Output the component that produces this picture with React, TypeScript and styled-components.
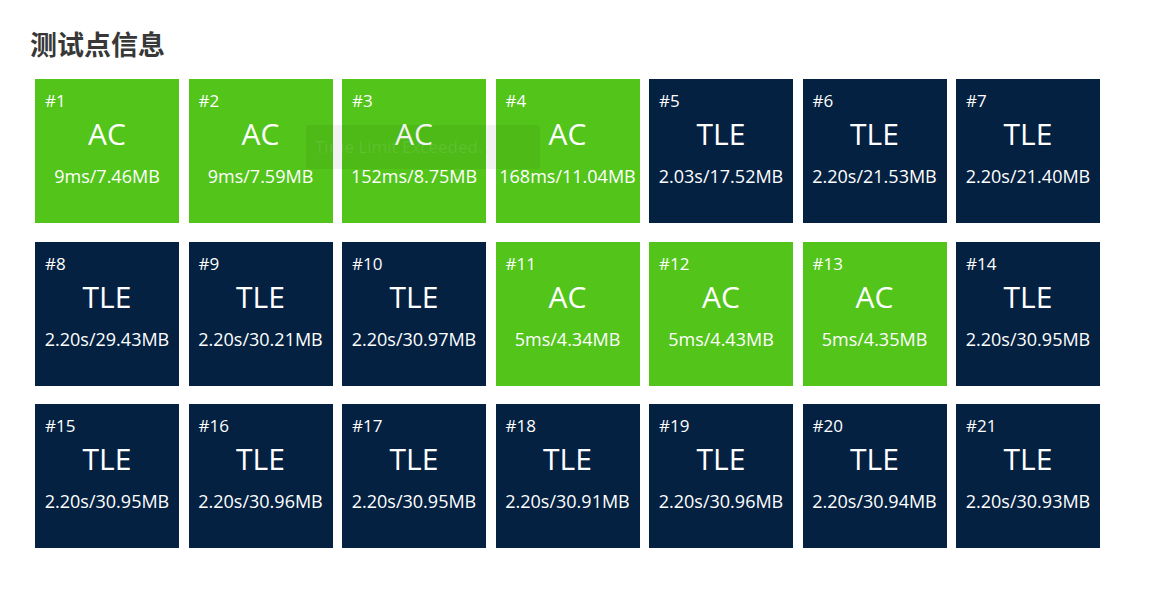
import React from 'react';
import styled, { createGlobalStyle } from 'styled-components';

const GlobalStyle = createGlobalStyle`
  html, body {
    margin: 0;
    padding: 0;
    background: #ffffff;
  }
  body {
    font-family: 'Open Sans', 'Noto Sans', 'Noto Sans CJK SC', sans-serif;
  }
`;

const Page = styled.div`
  width: 1154px;
  height: 593px;
  box-sizing: border-box;
  padding: 26px 0 0 30px;
`;

const Title = styled.h2`
  margin: 0;
  font-family: 'Noto Sans CJK SC', 'Noto Sans', sans-serif;
  font-size: 27px;
  font-weight: 700;
  line-height: 36px;
  color: #383838;
`;

const Grid = styled.div`
  position: relative;
  display: grid;
  grid-template-columns: repeat(7, 144px);
  column-gap: 9.5px;
  row-gap: 18.5px;
  margin: 17px 0 0 5px;
`;

const Tile = styled.div<{ $status: 'AC' | 'TLE' }>`
  height: 144px;
  box-sizing: border-box;
  padding: 11px 10px 0;
  display: flex;
  flex-direction: column;
  background: ${(p) => (p.$status === 'AC' ? '#52c41a' : '#042142')};
  color: #ffffff;
`;

const CaseId = styled.div`
  font-size: 17px;
  line-height: 22px;
`;

const Verdict = styled.div`
  margin-top: 3px;
  font-size: 30px;
  line-height: 38px;
  text-align: center;
`;

const Usage = styled.div`
  margin-top: 11px;
  font-size: 18px;
  line-height: 24px;
  text-align: center;
  white-space: nowrap;
  margin-left: -10px;
  margin-right: -10px;
`;

const Tooltip = styled.div`
  position: absolute;
  left: 271px;
  top: 46px;
  width: 234px;
  height: 44px;
  box-sizing: border-box;
  padding: 0 9px;
  border-radius: 4px;
  background: rgba(0, 0, 0, 0.05);
  color: rgba(255, 255, 255, 0.1);
  font-size: 17px;
  line-height: 44px;
  white-space: nowrap;
  pointer-events: none;
`;

type Case = { status: 'AC' | 'TLE'; usage: string };

const cases: Case[] = [
  { status: 'AC', usage: '9ms/7.46MB' },
  { status: 'AC', usage: '9ms/7.59MB' },
  { status: 'AC', usage: '152ms/8.75MB' },
  { status: 'AC', usage: '168ms/11.04MB' },
  { status: 'TLE', usage: '2.03s/17.52MB' },
  { status: 'TLE', usage: '2.20s/21.53MB' },
  { status: 'TLE', usage: '2.20s/21.40MB' },
  { status: 'TLE', usage: '2.20s/29.43MB' },
  { status: 'TLE', usage: '2.20s/30.21MB' },
  { status: 'TLE', usage: '2.20s/30.97MB' },
  { status: 'AC', usage: '5ms/4.34MB' },
  { status: 'AC', usage: '5ms/4.43MB' },
  { status: 'AC', usage: '5ms/4.35MB' },
  { status: 'TLE', usage: '2.20s/30.95MB' },
  { status: 'TLE', usage: '2.20s/30.95MB' },
  { status: 'TLE', usage: '2.20s/30.96MB' },
  { status: 'TLE', usage: '2.20s/30.95MB' },
  { status: 'TLE', usage: '2.20s/30.91MB' },
  { status: 'TLE', usage: '2.20s/30.96MB' },
  { status: 'TLE', usage: '2.20s/30.94MB' },
  { status: 'TLE', usage: '2.20s/30.93MB' },
];

export default function App() {
  return (
    <>
      <GlobalStyle />
      <Page>
        <Title>测试点信息</Title>
        <Grid>
          {cases.map((c, i) => (
            <Tile key={i} $status={c.status}>
              <CaseId>#{i + 1}</CaseId>
              <Verdict>{c.status}</Verdict>
              <Usage>{c.usage}</Usage>
            </Tile>
          ))}
          <Tooltip>Time Limit Exceeded.</Tooltip>
        </Grid>
      </Page>
    </>
  );
}
